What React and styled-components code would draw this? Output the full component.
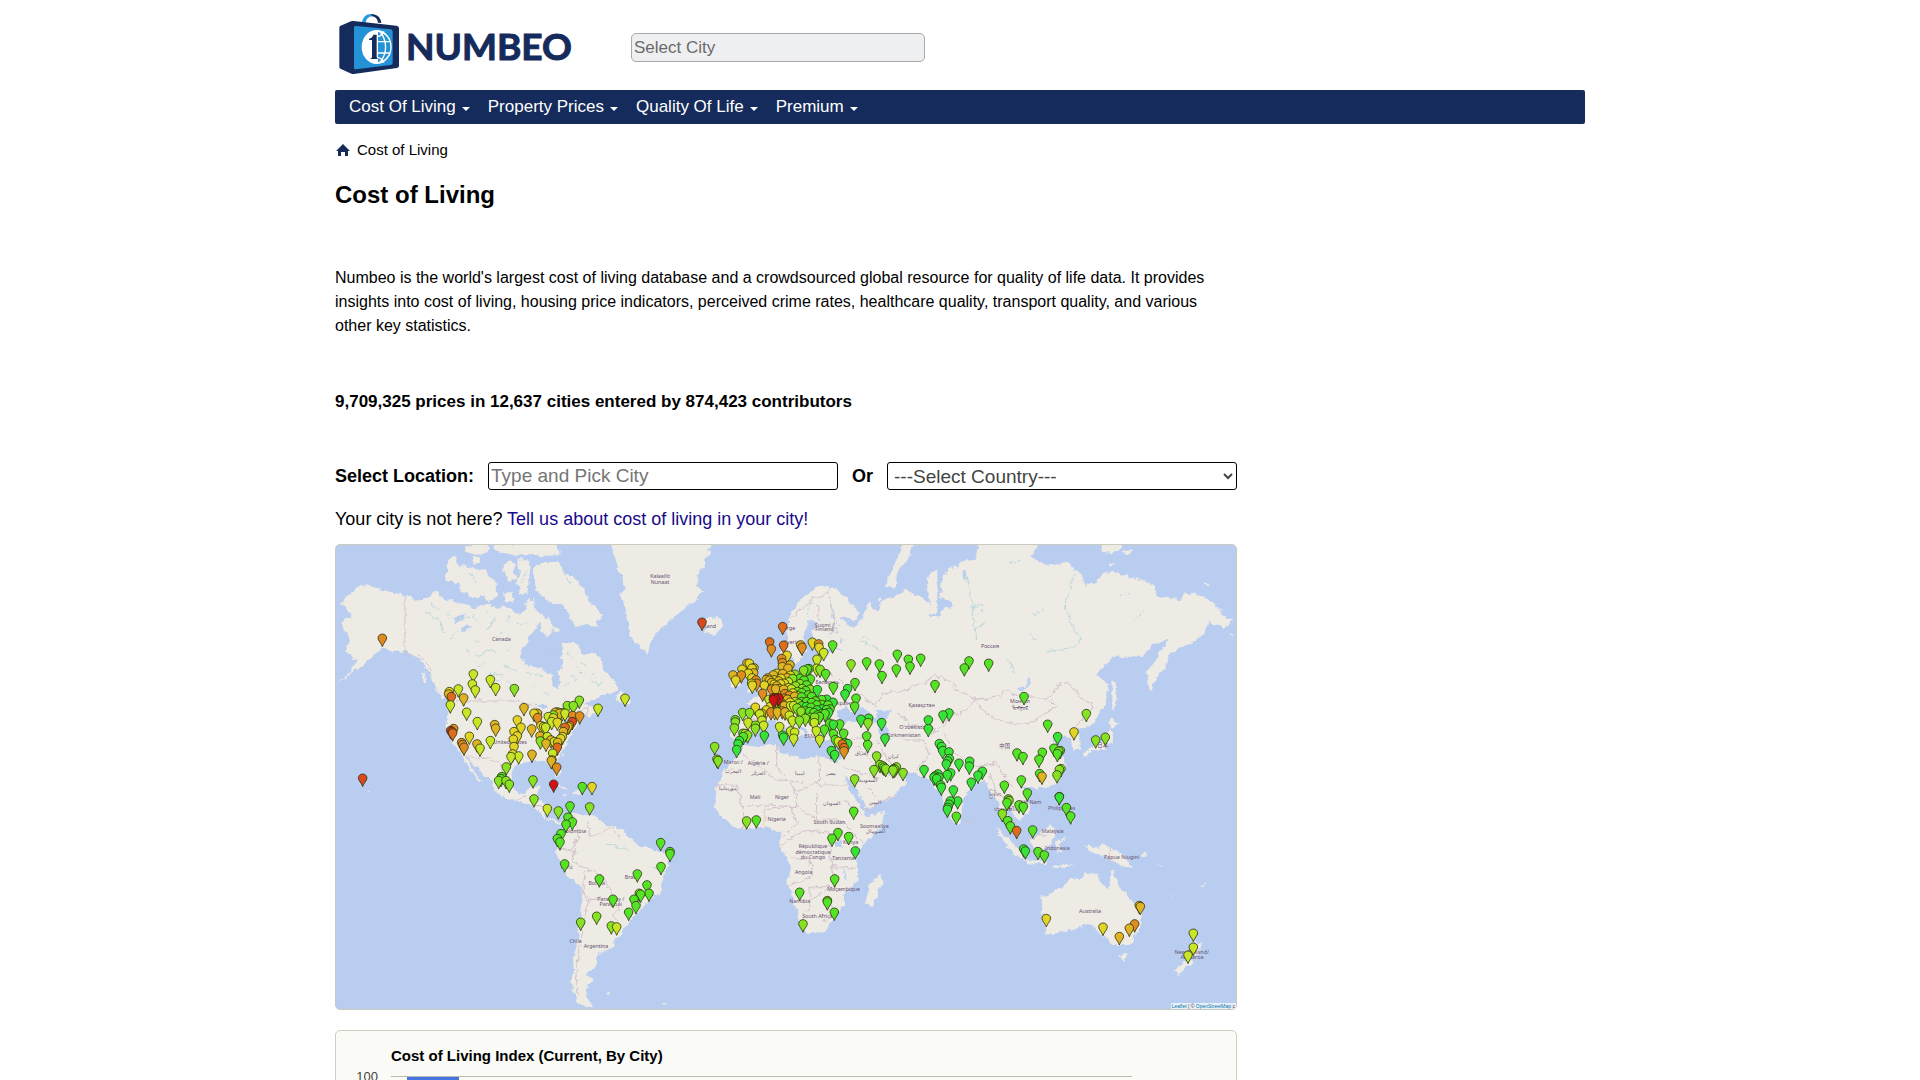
import React from "react";
import styled, { createGlobalStyle } from "styled-components";

const navy = "#152b5b";

const GlobalStyle = createGlobalStyle`
  body {
    margin: 0;
    background: #fff;
    color: #000;
    font-family: "Liberation Sans", Arial, sans-serif;
    font-size: 17px;
    line-height: 24px;
  }
  * { box-sizing: border-box; }
`;

const Page = styled.div`
  max-width: 1250px;
  margin: 0 auto;
`;
const Header = styled.header`
  display: flex;
  align-items: center;
  gap: 62px;
  height: 90px;
  padding: 0 4px 2px;
`;
const LogoLink = styled.a`
  display: flex;
  align-items: center;
  gap: 6px;
  color: ${navy};
  text-decoration: none;
`;
const LogoMark = styled.svg`
  display: block;
  width: 61px;
  height: 62px;
`;
const LogoText = styled.span`
  width: 163px;
  font: 700 37px/48px Lato, sans-serif;
  -webkit-text-stroke: 1px ${navy};
  padding-top: 4px;
`;
const HeaderInput = styled.input`
  width: 294px;
  height: 29px;
  margin-top: 6px;
  padding: 1px 2px 0;
  border: 1px solid #a9a9ab;
  border-radius: 5px;
  background: #eeeff1;
  font: 17px "Liberation Sans", Arial, sans-serif;
  &::placeholder { color: #6a6a6c; }
`;
const Nav = styled.nav`
  display: flex;
  gap: 18px;
  height: 34px;
  padding: 0 14px;
  border-radius: 2px;
  background: ${navy};
`;
const NavButton = styled.button`
  display: flex;
  align-items: center;
  gap: 6px;
  padding: 0;
  border: 0;
  background: none;
  color: #fff;
  font: 17px/24px "Liberation Sans", Arial, sans-serif;
  &::after {
    content: "";
    margin-top: 3px;
    border: 4px solid transparent;
    border-top-color: #fff;
    border-bottom: 0;
  }
`;
const Crumbs = styled.nav`
  display: flex;
  align-items: center;
  gap: 7px;
  padding: 14px 1px 0;
  font-size: 15px;
`;
const HomeLink = styled.a`
  display: flex;
  color: ${navy};
`;
const Title = styled.h1`
  margin: 17px 0 0;
  font-size: 24px;
  line-height: 32px;
`;
const Content = styled.main`
  width: 72.16%;
`;
const Intro = styled.p`
  margin: 55px 0 0;
  font-size: 16px;
`;
const Stats = styled.p`
  margin: 52px 0 0;
  font-weight: 700;
`;
const LocationForm = styled.form`
  display: flex;
  align-items: center;
  gap: 14px;
  margin-top: 48px;
  font-size: 18px;
  font-weight: 700;
`;
const CityInput = styled.input`
  flex: 1 1 0;
  min-width: 0;
  height: 28px;
  padding: 0 2px;
  border: 1px solid #000;
  border-radius: 3px;
  font: 19px "Liberation Sans", Arial, sans-serif;
  &::placeholder { color: #757575; }
`;
const CountrySelect = styled.select`
  flex: 1 1 0;
  min-width: 0;
  height: 28px;
  padding: 0 2px;
  border: 1px solid #000;
  border-radius: 3px;
  background: #fff;
  color: #444;
  font: 19px "Liberation Sans", Arial, sans-serif;
`;
const Missing = styled.p`
  margin: 17px 0 13px;
  font-size: 18px;
`;
const BodyLink = styled.a`
  color: #180a8a;
  text-decoration: none;
`;
const MapBox = styled.section`
  position: relative;
  overflow: hidden;
  border: 1px solid #c9ccbd;
  border-radius: 5px;
  background: #b8cdf0;
`;
const MapSvg = styled.svg`
  display: block;
  width: 100%;
  height: auto;
`;
const Attribution = styled.div`
  position: absolute;
  right: 0;
  bottom: 0;
  padding: 0 1px;
  background: rgba(255, 255, 255, 0.7);
  color: #333;
  font-size: 5px;
  line-height: 6px;
  a { color: #0078a8; text-decoration: none; }
`;
const ChartBox = styled.section`
  margin-top: 20px;
  padding: 15px 20px;
  border: 1px solid #cdd0bf;
  border-radius: 5px;
  background: #fafbf6;
`;
const ChartTitle = styled.h2`
  margin: 0;
  padding-left: 35px;
  font-size: 15px;
  line-height: 20px;
`;
const ChartRow = styled.div`
  display: flex;
  gap: 13px;
`;
const AxisLabel = styled.span`
  width: 22px;
  color: #444;
  font-size: 13px;
  line-height: 22px;
  text-align: right;
`;
const Plot = styled.div`
  width: 741px;
  height: 200px;
  margin-top: 10px;
  padding-left: 16px;
  border-top: 1px solid #b8bab4;
`;
const Bar = styled.div`
  width: 52px;
  height: 100%;
  background: #4374e0;
`;

const LAND = [
  // North and South America
  "M35 190L70 150L110 133L150 148L190 158L225 165L262 185L290 172L325 150L332 165L355 185L365 172L380 190L410 190L430 205L470 188L500 208L520 196L540 205L560 222L580 215L595 180L612 180L610 195L630 212L640 240L622 255L600 290L580 320L572 345L585 375L630 385L662 402L670 440L685 452L690 425L685 400L700 370L694 335L698 310L730 305L748 318L750 340L765 345L795 335L812 365L830 400L862 430L860 455L810 470L760 490L785 498L815 510L780 530L765 520L750 548L730 575L708 605L700 635L682 660L692 700L680 708L665 675L640 662L600 665L560 672L545 700L545 715L555 750L585 765L600 740L628 742L620 770L640 795L648 830L690 845L715 835L735 820L765 825L800 830L830 855L880 868L900 890L925 915L990 935L1025 948L1005 1000L987 1060L950 1090L912 1130L895 1150L870 1185L845 1205L850 1222L800 1245L797 1280L772 1300L787 1320L765 1355L775 1385L790 1402L750 1397L722 1350L732 1270L745 1170L757 1090L755 1040L715 1010L690 960L675 940L680 915L700 860L685 852L640 830L610 800L570 785L520 775L490 750L485 720L455 700L430 670L408 648L435 700L462 730L445 722L415 685L398 645L385 630L362 600L350 560L352 500L345 470L320 450L300 400L270 360L230 335L190 335L160 325L130 345L100 375L60 405L18 432L70 388L82 360L45 335L60 300L30 250L65 225Z",
  // Arctic archipelago and Newfoundland
  "M345 118L352 60L375 48L385 75L412 82L408 105L375 135ZM402 98L425 78L455 92L468 82L470 105L492 120L505 165L480 186L455 165L432 178L398 155L388 125ZM402 22L440 12L480 12L470 38L440 45L408 36ZM420 50L450 52L455 68L430 68ZM520 72L535 60L556 70L552 95L560 112L540 125L525 108ZM562 62L592 56L602 80L596 120L592 165L570 160L560 120L570 98ZM488 12L682 12L686 44L650 48L610 42L560 50L530 40L500 36ZM612 82L640 66L680 66L702 100L740 120L762 150L778 172L770 185L800 205L822 230L800 238L805 262L765 250L740 262L722 240L715 210L690 190L668 195L650 172L632 168L612 130ZM635 240L655 228L674 265L655 292L630 270ZM520 160L545 152L548 185L525 188ZM675 262L690 265L686 278L674 275ZM858 482L866 460L878 452L882 468L902 478L895 498ZM272 395L280 400L290 430L282 425ZM310 442L345 475L335 478Z",
  // Greenland and Iceland
  "M845 8L855 50L870 100L888 145L872 160L885 200L898 280L920 310L952 342L962 310L970 285L990 270L1020 240L1040 225L1070 200L1098 185L1118 150L1100 140L1110 90L1125 85L1122 60L1145 40L1132 30L1150 8ZM1108 248L1135 235L1165 232L1182 255L1160 280L1122 282L1128 265Z",
  // Europe and Asia
  "M1375 310L1372 250L1380 225L1412 180L1460 140L1490 135L1515 150L1550 175L1592 215L1580 240L1535 232L1555 258L1570 262L1600 237L1605 200L1620 188L1640 215L1660 180L1700 165L1730 150L1760 165L1800 190L1788 110L1822 92L1832 130L1855 80L1880 80L1905 62L1932 60L1950 8L2130 8L2100 50L2150 75L2210 65L2220 78L2245 90L2268 138L2300 125L2320 98L2360 95L2400 115L2440 120L2475 138L2480 170L2550 180L2565 160L2610 165L2650 190L2680 225L2707 240L2680 267L2636 240L2625 285L2570 315L2520 340L2510 370L2480 420L2458 457L2448 400L2470 370L2515 298L2470 315L2440 350L2350 350L2298 405L2335 430L2330 490L2280 560L2245 568L2250 625L2230 630L2225 590L2192 590L2165 600L2200 638L2205 680L2180 732L2130 745L2075 742L2102 790L2096 820L2065 842L2040 805L2028 815L2040 855L2062 890L2045 876L2015 830L2000 780L1985 760L1965 722L1930 732L1900 775L1890 855L1868 850L1850 800L1825 755L1800 718L1770 702L1715 695L1728 730L1690 770L1606 808L1595 770L1560 720L1530 690L1520 660L1545 640L1545 600L1490 602L1466 575L1470 590L1448 600L1430 575L1400 542L1375 525L1400 555L1428 580L1412 585L1400 605L1370 565L1340 540L1310 545L1280 552L1265 590L1230 605L1212 600L1200 590L1210 525L1262 522L1270 500L1245 488L1290 470L1320 440L1350 420L1352 380L1370 398L1400 405L1460 395L1462 350L1500 335L1540 328L1500 325L1462 325L1445 280L1465 250L1440 240L1420 290L1430 330L1400 372L1378 342L1352 340Z",
  "M1668 135L1690 80L1722 8L1760 8L1732 55L1702 100L1694 147ZM1240 370L1252 356L1270 358L1262 380L1285 415L1302 445L1250 457L1268 430L1255 405ZM1202 400L1235 395L1230 435L1205 442ZM1640 180L1652 175L1650 188Z",
  // Africa and Madagascar
  "M1240 615L1280 620L1338 608L1350 640L1420 655L1460 648L1520 665L1540 700L1552 740L1590 800L1615 828L1665 815L1655 860L1602 912L1580 950L1586 1020L1542 1060L1542 1095L1512 1140L1480 1175L1425 1183L1410 1140L1395 1090L1370 1030L1385 980L1350 920L1352 880L1312 860L1230 872L1185 840L1155 800L1160 740L1175 700L1195 675L1230 640ZM1650 1002L1658 1030L1625 1102L1607 1090L1614 1040Z",
  // Island Asia, Oceania
  "M1993 862L2040 898L2092 960L2070 956L2030 915ZM2085 958L2150 964L2152 976L2090 970ZM2098 898L2130 885L2160 852L2178 875L2155 920L2110 926ZM2178 905L2205 895L2188 912L2200 940L2186 925L2182 945ZM2262 918L2275 910L2285 925L2320 915L2372 935L2408 982L2380 980L2360 965L2318 952L2290 940ZM2165 976L2240 974L2180 984ZM2178 760L2196 780L2190 795ZM2195 800L2205 810L2198 815ZM2212 838L2236 836L2228 850ZM2344 528L2352 542L2372 545L2350 560L2336 555ZM2342 562L2348 608L2320 625L2285 632L2264 655L2256 640L2300 615L2325 600ZM2344 420L2358 430L2356 470L2362 480L2354 512L2344 505ZM2310 10L2380 12L2350 40L2315 35ZM2378 28L2410 30L2400 40L2380 38ZM2620 128L2648 130L2630 138ZM2335 66L2356 72L2340 80ZM2700 280L2714 286L2706 288ZM2430 945L2450 935L2446 948ZM2475 965L2500 985L2498 980ZM2510 1060L2532 1078L2526 1074ZM2612 1035L2626 1030L2618 1045Z",
  "M2134 1075L2200 1040L2215 1018L2240 1015L2250 1025L2265 1000L2302 1000L2308 1022L2335 1045L2348 990L2358 1010L2370 1040L2400 1075L2436 1120L2425 1170L2400 1215L2350 1215L2318 1190L2305 1180L2300 1160L2270 1155L2220 1170L2170 1182L2145 1180L2150 1150L2134 1110ZM2365 1242L2393 1244L2380 1270ZM2592 1190L2600 1215L2618 1210L2602 1245L2586 1255ZM2575 1258L2592 1262L2548 1302L2530 1292ZM668 728L716 748L700 748ZM728 752L758 758L740 766ZM700 762L714 764L702 768ZM828 1358L842 1356L834 1366ZM112 750L120 756L114 758ZM1000 1390L1010 1397L1004 1398Z",
];

const WATER = [
  "M1520 512L1545 500L1570 515L1595 503L1625 525L1652 548L1590 545L1530 545Z",
  "M1640 512L1680 515L1662 542L1682 600L1656 602L1645 560Z",
  "M1635 660L1665 700L1700 712L1690 690Z",
  "M606 492L640 492L655 508L640 504ZM650 520L662 518L660 550L650 545ZM675 505L700 515L690 530ZM690 545L720 535L716 545Z",
  "M2060 445L2082 440L2104 398L2098 430L2075 452Z",
  "M1518 902L1536 902L1534 924L1518 920ZM1499 935L1510 965L1504 968ZM1538 980L1550 1020L1544 1022Z",
  "M1822 95L1838 92L1830 170L1862 185L1864 205L1845 200L1828 225L1800 232L1800 222L1822 218ZM1898 90L1908 92L1906 120L1898 112Z",
  "M370 235L405 222L400 240L375 248ZM395 262L430 258L398 275ZM660 345L668 345L666 360ZM1530 300L1540 298L1538 312Z",
];

const STREAMS =
  "M290 215L325 240L345 280M375 240L420 232M390 265L350 300M500 235L470 270M440 350L480 330L500 340M520 375L560 395M480 400L520 405M590 400L640 410M810 440L780 415M740 380L760 400M2234 100L2205 190L2225 260L2255 300L2230 325L2150 335M1905 90L1925 180L1940 300M2035 360L2050 400M1970 250L1930 270M2100 280L2120 300M2040 70L2080 60M1500 190L1520 280M1590 300L1650 330M1480 560L1530 565M1020 1000L960 980M830 910L900 930";

const LAKES =
  "M300 190L330 215M360 210L350 240M430 225L445 250M470 215L480 230M540 225L530 250M560 250L600 250M500 290L520 280M545 320L530 335M450 300L430 310M410 330L420 345M465 370L440 385M505 420L500 435M530 425L545 440M560 435L575 445M610 440L625 430M700 435L715 425M740 420L725 405M770 380L750 365M715 340L725 355M790 400L800 415M820 430L800 440M690 480L705 470M640 460L660 470M1920 200L1970 195M1940 225L1960 210M2140 210L2110 225M2370 170L2400 160M2440 210L2410 240M1440 190L1430 230M1490 270L1505 285M1520 240L1530 260M1600 290L1615 300M250 350L285 400M720 1320L735 1370M700 90L720 130M420 100L440 130M590 90L575 130";

const BORDERS =
  "M225 165V335L250 350L268 345L300 385L310 410M375 483H570L610 500L650 530L690 545L750 515L775 500L770 525M405 645L440 655L480 655L510 675L530 700M1380 235L1425 200L1445 175L1485 170L1505 150M1500 170L1515 260L1500 290M1370 300L1365 250M1462 190L1470 240M1460 395L1500 400L1540 430L1560 440L1600 470L1640 500M1640 490L1660 460L1720 450L1790 425L1815 405L1850 420L1900 460L1935 480L2010 470L2020 450L2080 470L2160 475L2185 435L2220 432L2260 480L2290 490L2275 520L2240 560M1935 482L1980 530L2050 555L2100 550L2180 500L2160 480M1935 480L1910 510L1860 530L1840 560L1800 580M1700 510L1740 560L1790 555L1830 580M1720 600L1780 600L1800 640L1760 690M1640 600L1660 640L1700 690M1545 600L1620 590M1580 620L1640 680M1540 680L1590 700L1650 715M1840 580L1870 640L1940 680L2000 670L2015 700L2050 740M1980 700L2000 760L2040 780M1240 640L1340 720L1420 725M1340 610V680L1400 755M1468 650V735H1558M1400 755L1480 715M1160 735H1220L1235 800L1310 795L1400 800L1395 755M1180 690H1210M1240 800V870M1305 860V800M1300 810L1385 800L1400 850L1360 890M1400 800L1460 840L1530 840M1460 840V760M1540 780L1600 830M1530 840L1600 910M1350 920L1390 890L1420 870L1500 880L1500 960L1520 1030M1385 950L1440 960L1450 1010L1370 1040M1440 1040H1500M1440 1040V1110L1420 1120M1440 1085L1500 1040L1540 1050M1500 980L1585 985M1480 1140L1498 1130L1488 1148ZM1500 1080L1515 1130M735 830L745 890L720 940M770 840L780 895L850 860L870 900M680 920L740 940M740 900L730 970L765 985L820 1010L850 1070L870 1110L845 1120M765 985L760 1060L775 1080L820 1075M845 1120L870 1150M775 1080L750 1200L738 1300L745 1370M560 780L590 770M610 795L640 800M1900 835L1920 850M2338 925V970M2098 898L2150 885M1610 810L1700 760M1640 770L1610 740M1500 500L1440 470L1390 460M1380 500L1480 540M1330 450L1350 500M1250 530L1280 540M1225 530V590";

const LABELS = [
  [514, 304, "Canada"], [540, 613, "United States"], [990, 115, "Kalaallit"], [990, 131, "Nunaat"],
  [1135, 265, "Ísland"], [1372, 270, "Norge"], [1390, 312, "Sverige"], [1483, 260, "Suomi /"],
  [1483, 274, "Finland"], [1492, 431, "Беларусь"], [1540, 496, "Україна"], [1980, 323, "Россия"],
  [1775, 500, "Қазақстан"], [1752, 568, "O'zbekiston"], [1720, 592, "Türkmenistan"], [2070, 490, "Монгол"],
  [2070, 510, "ᠮᠣᠩᠭᠣᠯ"], [2024, 623, "中国"], [2318, 620, "日本"], [1210, 671, "Maroc /"],
  [1210, 700, "المغرب"], [1285, 675, "Algérie /"], [1285, 706, "الجزائر"], [1410, 705, "ليبيا"],
  [1503, 704, "مصر"], [1595, 645, "العراق"], [1690, 655, "ایران"], [1195, 750, "موريتانيا"],
  [1275, 776, "Mali"], [1356, 776, "Niger"], [1505, 794, "السودان"], [1340, 843, "Nigeria"],
  [1498, 851, "South Sudan"], [1633, 863, "Soomaaliya"], [1636, 880, "الصومال"], [1562, 912, "Kenya"],
  [1449, 925, "République"], [1449, 941, "démocratique"], [1449, 956, "du Congo"], [1540, 959, "Tanzania"],
  [1421, 1001, "Angola"], [1541, 1053, "Moçambique"], [1409, 1088, "Namibia"], [1462, 1135, "South Africa"],
  [1615, 725, "السعودية"], [1635, 793, "اليمن"], [732, 880, "Colombia"], [710, 988, "Perú"],
  [800, 1034, "Bolivia"], [905, 1018, "Brasil"], [842, 1084, "Paraguay /"], [842, 1099, "Paraguái"],
  [737, 1208, "Chile"], [798, 1225, "Argentina"], [2195, 809, "Philippines"], [2168, 879, "Malaysia"],
  [2182, 929, "Indonesia"], [2375, 957, "Papua Niugini"], [2280, 1119, "Australia"], [2585, 1241, "New Zealand/"],
  [2586, 1257, "Aotearoa"], [1995, 767, "မြန်မာ"], [2100, 792, "Việt Nam"], [2035, 812, "ประเทศไทย"], [1445, 595, "Ελλάς"],
];

const PIN_COLORS = {
  E: "#36e437", G: "#55e326", L: "#87e224", Y: "#c8e526", y: "#e2d425",
  o: "#e0b323", O: "#de8c20", R: "#df6c1c", D: "#da4620", X: "#d30f18",
};

// Head centre and cost colour of every city, grouped by map tile.
const PINS = [
  [0, 0, "157,295,O 430,402,Y 481,419,Y 427,432,Y 436,450,Y 497,443,Y 553,446,L 385,447,Y 358,455,y 356,462,o 364,470,R 401,474,o 361,495,Y 410,517,Y 442,545,Y 494,554,o 497,565,o 582,503,o 562,540,y 573,562,y 605,567,o 481,602,Y 418,589,y 441,612,o 450,625,Y 371,566,O 362,572,D 366,575,D 368,579,R 395,608,O 398,614,O 402,622,O 552,575,y 562,588,y 550,598,y 552,620,y 548,642,y 543,650,Y 566,648,Y 606,643,o 529,681,L 622,520,o 612,520,y 623,533,O 633,557,y 641,560,y 647,562,Y 630,588,o 631,603,L 652,590,Y 648,610,o 663,600,o 655,530,Y 670,525,L 676,517,o 682,516,L 688,520,o 697,518,Y 705,520,Y 712,497,L 730,497,L 748,481,L 682,547,y 665,545,Y 670,534,y 728,527,O 749,528,O 727,545,D 718,556,O 714,560,o 705,562,R 700,575,o 697,590,y 692,596,y 683,607,o 673,605,Y 682,622,R 668,640,Y 666,660,y 664,662,o 680,682,O 804,505,Y 885,475,Y 98,715,D"],
  [0, 690, "515,20,G 506,32,L 513,26,G 528,32,L 538,43,L 609,30,L 612,87,L 671,43,X 757,50,G 786,50,y 720,108,G 779,111,L 652,116,Y 685,123,L 714,142,G 727,156,G 708,163,G 693,191,G 682,206,G 690,216,G 704,282,G 808,327,G 849,388,G 800,439,L 752,457,L 844,468,L 860,471,Y 896,427,G"],
  [900, 690, "92,218,G 120,245,G 120,251,G 93,290,G 22,312,G 51,345,G 57,370,G 28,370,L 32,373,G 12,388,G 18,407,G 350,153,L 379,150,G 671,124,G 624,188,G 606,205,G 656,200,G 676,243,E 614,327,G 509,367,G 592,392,L 592,396,G 613,427,G 519,462,L 674,27,L"],
  [900, 0, "216,247,D 458,260,R 419,306,R 424,327,O 461,316,R 512,315,o 516,322,O 547,307,y 566,312,O 567,322,y 581,338,Y 608,315,G 471,346,y 455,356,O 457,368,O 457,380,o 480,375,o 474,385,o 561,358,Y 560,385,Y 570,388,L 587,401,G 663,372,L 710,366,G 748,372,G 756,407,G 802,343,G 799,387,G 835,358,G 840,379,G 872,355,G 675,428,G 610,440,G 562,449,E 653,446,E 645,462,E 678,475,G 674,499,G 693,538,E 716,535,E 714,548,L 755,548,E 710,588,G 713,614,G 765,595,E 740,648,L 351,370,o 358,370,y 336,388,y 366,385,y 372,384,o 309,405,o 334,405,O 317,420,y 355,400,y 371,399,o 366,414,y 378,420,O 380,430,O 365,430,y 367,436,y 398,460,O 430,405,o 440,400,y 458,401,o 413,414,o 409,419,o 418,421,o 425,428,o 403,436,y 433,420,y 446,423,o 453,415,y 472,413,o 481,406,y 425,447,O 437,447,o 448,446,o 461,448,o 433,433,y 440,438,o 452,432,y 463,430,y 475,426,Y 488,416,L 495,403,L 510,415,G 521,391,L 532,387,G 537,386,G 522,421,G 541,417,G 510,431,L 497,438,L 484,447,Y 530,435,G 517,446,L 503,455,L 515,458,G 527,452,G 540,448,L 476,443,y 488,459,y 465,461,O 478,466,O 494,469,o 505,468,Y 515,471,G 535,465,G 545,470,G 431,473,X 436,476,X 443,473,X 447,475,X 430,479,X 462,475,O 472,478,o 417,478,Y 440,488,o 452,486,y 455,493,Y 463,497,o 430,495,y 422,499,y 409,510,y 376,502,y 395,520,o 389,522,Y 423,516,O 434,515,y 442,516,o 457,513,O 465,516,o 482,497,Y 480,487,y 496,485,Y 491,497,Y 505,490,L 501,504,L 515,485,G 516,498,G 530,485,G 529,500,E 545,488,G 543,502,G 556,483,G 560,495,G 561,510,E 575,479,G 576,494,G 575,507,E 590,478,E 594,495,G 590,509,G 609,487,E 513,514,L 526,513,G 539,515,G 552,518,G 563,525,G 574,521,G 585,521,G 596,517,E 600,507,G 478,526,Y 487,541,Y 508,541,L 526,535,L 541,532,G 554,532,L 568,530,G 553,548,Y 583,568,G 599,550,G 610,553,E 629,552,G 610,581,G 641,580,G 559,572,Y 569,598,Y 625,604,Y 616,599,G 645,608,G 653,611,E 637,612,R 642,623,R 642,633,O 604,632,E 614,644,E 338,518,L 359,518,L 316,539,G 316,546,L 313,564,L 354,547,Y 377,556,L 376,565,L 396,541,Y 401,556,Y 346,581,Y 353,585,L 340,590,G 339,580,G 328,602,E 324,612,E 320,629,E 403,586,E 449,560,Y 458,586,E 461,592,E 482,573,Y 494,577,Y 491,595,Y 254,620,L 261,658,L 264,662,L 732,689,L 750,674,L 758,678,L 762,682,G 767,686,L 799,681,L 791,686,G 789,690,L 794,688,L 819,698,L"],
  [1800, 0, "117,363,G 103,384,G 176,370,G 15,434,G -5,540,E 39,525,E 57,519,E -5,566,E 282,470,G 353,553,G 383,590,E 432,576,y 469,521,L 497,600,L 526,592,L 28,611,E 35,620,E 38,632,E 57,636,E 58,656,E 53,663,E 49,672,E 87,670,E 119,664,E 118,679,E 157,694,E 144,706,E 62,699,E 52,704,E 24,702,E 15,708,E 27,712,E 20,716,E 12,712,E -18,689,E 261,639,G 279,650,G 337,637,G 327,658,G 372,625,G 391,632,G 386,634,L 382,641,G 393,686,L 388,689,L 381,705,L 329,701,G 336,709,o"],
  [1800, 690, "32,45,E 34,52,E 124,37,E 70,60,E 83,93,E 61,93,E 57,103,E 54,112,E 52,118,E 79,139,G 223,46,G 274,30,G 292,69,G 388,80,G 388,81,E 409,113,G 422,138,G 235,87,G 237,92,L 231,98,G 267,105,G 280,110,G 217,131,L 233,152,G 241,168,G 260,182,R 308,180,G 281,237,E 286,243,E 324,245,G 343,255,G 349,446,y 519,472,y 628,407,o 631,410,o 614,462,O 598,475,o 568,500,o 790,490,Y 790,532,Y 774,556,Y"],
];

const allPins = PINS.flatMap(([dx, dy, list]) =>
  list.split(" ").map((entry) => {
    const [x, y, tone] = entry.split(",");
    return { x: dx + Number(x), y: dy + Number(y), tone };
  })
).sort((a, b) => (a.tone === "X") - (b.tone === "X") || a.y - b.y);

function WorldMap() {
  return (
    <MapSvg viewBox="18 15 2700 1392" role="img" aria-label="Cost of living by city">
      <defs>
        <filter id="coast" x="0" y="0" width="2720" height="1410" filterUnits="userSpaceOnUse">
          <feTurbulence type="fractalNoise" baseFrequency="0.05" numOctaves="4" seed="4" />
          <feDisplacementMap in="SourceGraphic" scale="20" xChannelSelector="R" yChannelSelector="G" />
        </filter>
        <path id="pin" d="M0 25C-3 14-13 7-13-1C-13-8-7-13 0-13S13-8 13-1C13 7 3 14 0 25Z" />
      </defs>
      <g filter="url(#coast)">
        {LAND.map((d) => <path key={d} d={d} fill="#eeeae4" />)}
        {WATER.map((d) => <path key={d} d={d} fill="#b8cdf0" />)}
        <path d={STREAMS} fill="none" stroke="#b9d8dc" strokeWidth="3" />
        <path d={LAKES} fill="none" stroke="#bfdbe2" strokeWidth="4" strokeDasharray="7 6" />
        <path d={BORDERS} fill="none" stroke="#d3c1cb" strokeWidth="3" />
      </g>
      <g fill="#67516f" fontFamily='"Noto Sans", "Noto Sans CJK SC", sans-serif' fontSize="16" textAnchor="middle">
        {LABELS.map(([x, y, name]) => <text key={name} x={x} y={y}>{name}</text>)}
      </g>
      <g stroke="#2c3310" strokeOpacity="0.8" strokeWidth="3">
        {allPins.map((p, i) => (
          <use key={i} href="#pin" x={p.x} y={p.y} fill={PIN_COLORS[p.tone]} />
        ))}
      </g>
    </MapSvg>
  );
}

function Logo() {
  return (
    <LogoMark viewBox="26 15 183 186" aria-hidden="true">
      <path d="M95 45C96 27 109 17 125 18L138 23C119 22 108 29 106 45Z" fill="#2a9bdc" />
      <path d="M124 19C141 18 151 29 153 45L143 44C141 33 136 26 124 25Z" fill={navy} />
      <path d="M27 59Q27 55 31 53L62 40Q65 38 70 39L198 53Q206 54 206 61V173Q206 179 200 180L70 198Q65 199 60 196L32 183Q27 181 27 177Z" fill={navy} />
      <path d="M71 59Q71 53 77 54L181 64Q187 65 187 71V164Q187 170 181 171L77 184Q71 185 71 179Z" fill="#2492d6" />
      <ellipse cx="139" cy="117" rx="45" ry="51" fill="#fff" />
      <path d="M143 72C166 76 180 94 180 117S166 158 143 162Z" fill="#2492d6" />
      <path d="M143 101H179M143 135H179M150 72C171 99 171 135 150 162M161 70Q154 84 143 85M161 164Q154 150 143 149" fill="none" stroke="#fff" strokeWidth="4" />
      <path d="M116 92Q126 90 129 80H139V146Q139 151 144 153H118Q125 151 125 146V96H116Z" fill={navy} />
    </LogoMark>
  );
}

const MENUS = ["Cost Of Living", "Property Prices", "Quality Of Life", "Premium"];

export default function App() {
  return (
    <>
      <GlobalStyle />
      <Page>
        <Header>
          <LogoLink href="#home" aria-label="Numbeo">
            <Logo />
            <LogoText>NUMBEO</LogoText>
          </LogoLink>
          <HeaderInput type="text" placeholder="Select City" aria-label="Select City" />
        </Header>
        <Nav>
          {MENUS.map((name) => <NavButton key={name} type="button">{name}</NavButton>)}
        </Nav>
        <Crumbs>
          <HomeLink href="#home" aria-label="Home">
            <svg width="14" height="14" viewBox="0 0 14 14" aria-hidden="true">
              <path d="M7 1L14 8H12V13H9V9H5V13H2V8H0Z" fill="currentColor" />
            </svg>
          </HomeLink>
          <span>Cost of Living</span>
        </Crumbs>
        <Title>Cost of Living</Title>
        <Content>
          <Intro>
            Numbeo is the world's largest cost of living database and a crowdsourced global resource for
            quality of life data. It provides insights into cost of living, housing price indicators,
            perceived crime rates, healthcare quality, transport quality, and various other key statistics.
          </Intro>
          <Stats>9,709,325 prices in 12,637 cities entered by 874,423 contributors</Stats>
          <LocationForm>
            <label htmlFor="city">Select Location:</label>
            <CityInput id="city" type="text" placeholder="Type and Pick City" />
            <label htmlFor="country">Or</label>
            <CountrySelect id="country">
              <option>---Select Country---</option>
            </CountrySelect>
          </LocationForm>
          <Missing>
            Your city is not here? <BodyLink href="#add">Tell us about cost of living in your city!</BodyLink>
          </Missing>
          <MapBox>
            <WorldMap />
            <Attribution>
              <a href="#leaflet">Leaflet</a> | © <a href="#osm">OpenStreetMap</a> c
            </Attribution>
          </MapBox>
          <ChartBox>
            <ChartTitle>Cost of Living Index (Current, By City)</ChartTitle>
            <ChartRow>
              <AxisLabel>100</AxisLabel>
              <Plot><Bar /></Plot>
            </ChartRow>
          </ChartBox>
        </Content>
      </Page>
    </>
  );
}
